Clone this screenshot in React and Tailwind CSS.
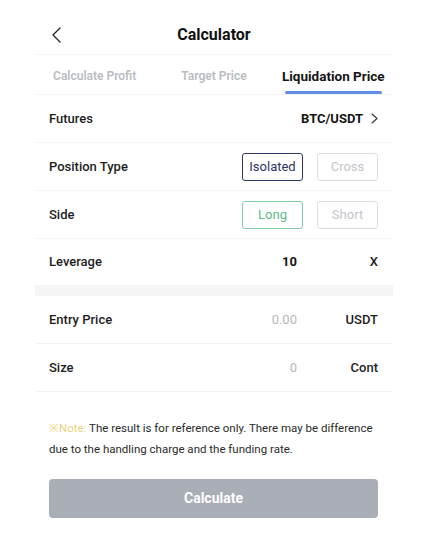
import React, { useState } from 'react'

const tabs = ['Calculate Profit', 'Target Price', 'Liquidation Price']

function Toggle({ options, value, onChange, activeClass }) {
  return (
    <div className="flex gap-[14px]">
      {options.map(opt => (
        <button
          key={opt}
          onClick={() => onChange(opt)}
          className={
            'w-[61px] h-[28px] rounded-[3px] border text-[13px] leading-none ' +
            (value === opt ? activeClass : 'border-[#dfe0e4] text-[#c3c6cb]')
          }
        >
          {opt}
        </button>
      ))}
    </div>
  )
}

function Row({ label, children, border = true, h = 'h-[48px]' }) {
  return (
    <div className={'flex items-center justify-between pl-[14px] pr-[15px] ' + h + (border ? ' border-b border-[#f3f3f4]' : '')}>
      <span className="text-[13px] font-medium text-[#1e1e1e]">{label}</span>
      {children}
    </div>
  )
}

export default function App() {
  const [tab, setTab] = useState('Liquidation Price')
  const [posType, setPosType] = useState('Isolated')
  const [side, setSide] = useState('Long')

  return (
    <div className="w-[434px] h-[552px] bg-white font-['Roboto',sans-serif] text-[#1e1e1e]">
      <div className="ml-[35px] w-[358px]">
        {/* header */}
        <div className="relative flex items-center justify-center h-[55px] pt-[15px] border-b border-[#f3f3f4]">
          <button className="absolute left-[17px] top-[27px]">
            <svg width="9" height="16" viewBox="0 0 9 16" fill="none">
              <path d="M8 1L1 8L8 15" stroke="#222" strokeWidth="1.3" strokeLinecap="round" strokeLinejoin="round" />
            </svg>
          </button>
          <h1 className="text-[16px] font-bold text-[#111]">Calculator</h1>
        </div>

        {/* tabs */}
        <div className="grid grid-cols-3 h-[40px] border-b border-[#f3f3f4]">
          {tabs.map(t => (
            <button key={t} onClick={() => setTab(t)} className="flex flex-col items-center pt-[12px]">
              <span
                className={
                  'leading-[18px] whitespace-nowrap ' +
                  (tab === t ? 'text-[13.5px] font-bold text-[#151515]' : 'text-[12px] font-semibold text-[#b9bcc3]')
                }
              >
                {t}
              </span>
              <span className={'mt-[6px] h-[3px] w-[97px] rounded-full ' + (tab === t ? 'bg-[#5f8ee8]' : 'bg-transparent')} />
            </button>
          ))}
        </div>

        <Row label="Futures">
          <div className="flex items-center gap-[8px]">
            <span className="text-[13px] font-bold text-[#151515]">BTC/USDT</span>
            <svg width="7" height="11" viewBox="0 0 7 11" fill="none">
              <path d="M1 1L6 5.5L1 10" stroke="#333" strokeWidth="1.1" strokeLinecap="round" strokeLinejoin="round" />
            </svg>
          </div>
        </Row>
        <Row label="Position Type">
          <Toggle
            options={['Isolated', 'Cross']}
            value={posType}
            onChange={setPosType}
            activeClass="border-[#2e3668] text-[#2e3668]"
          />
        </Row>
        <Row label="Side">
          <Toggle
            options={['Long', 'Short']}
            value={side}
            onChange={setSide}
            activeClass="border-[#7fcca5] text-[#5dbb8c]"
          />
        </Row>
        <Row label="Leverage" border={false} h="h-[46px]">
          <div className="flex items-center">
            <span className="text-[13px] font-bold text-[#151515]">10</span>
            <span className="w-[81px] text-right text-[13px] font-medium">X</span>
          </div>
        </Row>

        <div className="h-[11px] bg-[#f5f5f6]" />

        <Row label="Entry Price">
          <div className="flex items-center">
            <span className="text-[13px] text-[#b8b8b8]">0.00</span>
            <span className="w-[81px] text-right text-[13px] font-medium">USDT</span>
          </div>
        </Row>
        <Row label="Size">
          <div className="flex items-center">
            <span className="text-[13px] text-[#b8b8b8]">0</span>
            <span className="w-[81px] text-right text-[13px] font-medium">Cont</span>
          </div>
        </Row>
      </div>

      <div className="ml-[49px] w-[329px] mt-[26px]">
        <p className="text-[11.5px] leading-[21px] text-[#2a2a2a]">
          <span className="text-[#e9d47c]">※Note: </span>
          <span>The result is for reference only. There may be difference due to the handling charge and the funding rate.</span>
        </p>
        <button className="mt-[19px] w-full h-[39px] rounded-[4px] bg-[#a9aeb7] text-white text-[14px] font-bold">
          Calculate
        </button>
      </div>
    </div>
  )
}
